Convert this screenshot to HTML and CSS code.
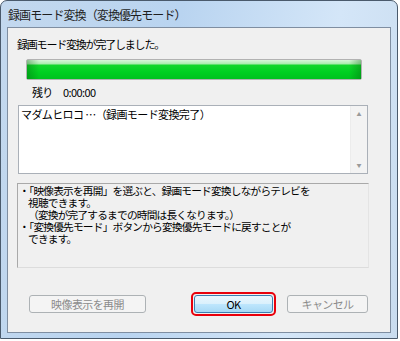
FILE: index.html
```html
<!DOCTYPE html>
<html lang="ja">
<head>
    <meta charset="UTF-8">
    <meta name="viewport" content="width=device-width, initial-scale=1.0">
    <title>録画モード変換（変換優先モード）</title>
    <link rel="stylesheet" href="styles.css">
</head>
<body>
    <div class="window">
        <div class="title-bar">録画モード変換（変換優先モード）</div>
        <div class="client">
            <p class="message">録画モード変換が完了しました。</p>

            <div class="progress">
                <div class="progress-fill"></div>
            </div>

            <div class="remain">
                <span class="remain-label">残り</span>
                <span class="remain-time">0:00:00</span>
            </div>

            <!-- 変換結果のリスト -->
            <div class="listbox">
                <div class="list-text">マダムヒロコ …（録画モード変換完了）</div>
                <div class="scrollbar">
                    <span class="arrow">&#9650;</span>
                    <span class="arrow">&#9660;</span>
                </div>
            </div>

            <div class="info">
                <div class="info-line">・「映像表示を再開」を選ぶと、録画モード変換しながらテレビを</div>
                <div class="info-line indent">視聴できます。</div>
                <div class="info-line indent">（変換が完了するまでの時間は長くなります。）</div>
                <div class="info-line">・「変換優先モード」ボタンから変換優先モードに戻すことが</div>
                <div class="info-line indent">できます。</div>
            </div>

            <div class="buttons">
                <button class="btn btn-resume" disabled>映像表示を再開</button>
                <div class="focus-ring">
                    <button class="btn btn-ok">OK</button>
                </div>
                <button class="btn btn-cancel" disabled>キャンセル</button>
            </div>
        </div>
    </div>
</body>
</html>
```

FILE: styles.css
```css
body {
    margin: 0;
    padding: 0;
    background-color: #ffffff;
    font-family: "Noto Sans CJK JP", "Noto Sans", sans-serif;
    font-size: 11px;
    color: #000;
}
.window {
    width: 398px;
    height: 339px;
    box-sizing: border-box;
    border: 1px solid #4a5a6c;
    border-radius: 7px 7px 0 0;
    background: linear-gradient(100deg, #c3d8ee 0%, #b9d4f0 40%, #d4e6f8 75%, #c9dcef 100%);
    display: flex;
    flex-direction: column;
    padding: 0 6px 5px 6px;
}
.title-bar {
    height: 26px;
    line-height: 27px;
    padding-left: 1px;
    font-size: 12px;
    letter-spacing: -0.9px;
    color: #1e1e1e;
    white-space: nowrap;
}
.client {
    flex: 1;
    background-color: #f0f0f0;
    border: 1px solid #7f8ea1;
    display: flex;
    flex-direction: column;
}
.message {
    margin: 8px 0 0 9px;
    line-height: 16px;
    letter-spacing: -1.2px;
}
.progress {
    margin: 7px 0 0 18px;
    width: 336px;
    height: 21px;
    box-sizing: border-box;
    border: 1px solid #b2b2b2;
    border-radius: 2px;
    background: #e6e6e6;
}
.progress-fill {
    height: 100%;
    background:
        linear-gradient(90deg, rgba(0, 90, 10, 0.35) 0, rgba(0, 90, 10, 0) 12px, rgba(0, 90, 10, 0) calc(100% - 12px), rgba(0, 90, 10, 0.35) 100%),
        linear-gradient(180deg, #d9f6d9 0, #a9ecab 4px, #13d62b 5px, #00d021 12px, #00c21e 100%);
}
.remain {
    margin: 4px 0 0 24px;
    height: 16px;
    line-height: 16px;
    display: flex;
    letter-spacing: -0.8px;
}
.remain-label {
    width: 31px;
}
.remain-time {
    letter-spacing: -0.6px;
}
.listbox {
    margin: 5px 0 0 10px;
    width: 350px;
    height: 69px;
    box-sizing: border-box;
    border: 1px solid #aab0b8;
    background: #ffffff;
    display: flex;
}
.list-text {
    flex: 1;
    padding: 1px 0 0 2px;
    line-height: 14px;
    letter-spacing: -0.6px;
    white-space: nowrap;
}
.scrollbar {
    width: 16px;
    background: #f3f3f3;
    border-left: 1px solid #ececec;
    display: flex;
    flex-direction: column;
    justify-content: space-between;
    align-items: center;
    padding: 4px 0 4px 0;
}
.arrow {
    font-size: 5px;
    color: #9a9a9a;
    line-height: 8px;
}
.info {
    margin: 9px 0 0 9px;
    width: 352px;
    height: 85px;
    box-sizing: border-box;
    border: 1px solid #a9a9a9;
    border-right-color: #e4e4e4;
    border-bottom-color: #dcdcdc;
    padding: 1px 0 0 1px;
    font-family: "Liberation Sans", "Noto Sans CJK JP", sans-serif;
    font-size: 10.7px;
    letter-spacing: -0.8px;
}
.info-line {
    line-height: 12px;
    white-space: nowrap;
}
.indent {
    padding-left: 9px;
}
.buttons {
    margin: 24px 0 0 21px;
    display: flex;
    align-items: center;
}
.btn {
    font-family: inherit;
    font-size: 11px;
    letter-spacing: -0.6px;
    height: 18px;
    padding: 0;
    border: 1px solid #adb2b5;
    border-radius: 3px;
    background: #f4f4f4;
    color: #8c8c8c;
    line-height: 14px;
}
.btn-resume {
    width: 117px;
}
.focus-ring {
    margin-left: 45px;
    border: 2px solid #e8000b;
    border-radius: 5px;
    padding: 1px;
}
.btn-ok {
    display: block;
    width: 79px;
    height: 18px;
    border-color: #3c7fb1;
    border-radius: 3px;
    color: #000;
    background: linear-gradient(180deg, #eaf6fd 0%, #d9f0fc 50%, #bee6fd 51%, #a7d9f5 100%);
}
.btn-cancel {
    margin-left: 11px;
    width: 81px;
}
```
